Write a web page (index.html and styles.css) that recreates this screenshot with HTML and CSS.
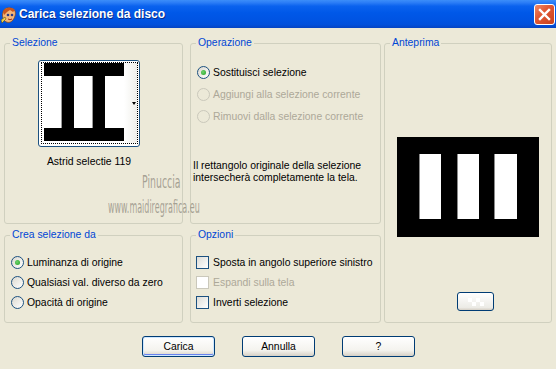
FILE: index.html
```html
<!DOCTYPE html>
<html lang="it">
<head>
    <meta charset="UTF-8">
    <title>Carica selezione da disco</title>
    <link rel="stylesheet" href="styles.css">
</head>
<body>
    <div class="window">
        <div class="titlebar">
            <svg class="app-icon" width="16" height="17" viewBox="0 0 16 17">
                <path d="M3 3 C5 0 12 0 14 4 C15 7 14 11 11 14 C9 16 5 16 3 13 C1 10 1 6 3 3Z" fill="#f2b77c" stroke="#8a4a1c" stroke-width="0.8"/>
                <path d="M2 5 C3 1 10 -1 14 3 L12 5 L9 3 L6 5 L3 8Z" fill="#c8561e"/>
                <circle cx="7" cy="8" r="1.3" fill="#2a3a8a"/>
                <circle cx="11" cy="8" r="1.3" fill="#2a3a8a"/>
                <path d="M7 12 Q9 13.5 11 12" stroke="#a0301a" stroke-width="1" fill="none"/>
                <path d="M0 13 L4 10 L5 12 L1 16Z" fill="#e8d050" stroke="#6a5010" stroke-width="0.6"/>
            </svg>
            <span class="title">Carica selezione da disco</span>
            <span class="close-btn">
                <svg width="13" height="13" viewBox="0 0 13 13">
                    <path d="M2 2 L11 11 M11 2 L2 11" stroke="#fff" stroke-width="2.4" stroke-linecap="square"/>
                </svg>
            </span>
        </div>

        <div class="content">
            <div class="groups">
                <fieldset class="grp sel">
                    <legend>Selezione</legend>
                    <div class="thumb-wrap">
                        <div class="thumb">
                            <div class="focus">
                                <svg class="thumb-img" width="80" height="78" viewBox="0 0 80 78">
                                    <rect width="80" height="78" fill="#fff"/>
                                    <rect width="80" height="13" fill="#000"/>
                                    <rect y="65" width="80" height="13" fill="#000"/>
                                    <rect x="18" width="12" height="78" fill="#000"/>
                                    <rect x="49" width="12" height="78" fill="#000"/>
                                    <rect x="17" y="13" width="1" height="52" fill="#9a9a9a"/>
                                    <rect x="48" y="13" width="1" height="52" fill="#9a9a9a"/>
                                </svg>
                                <div class="drop"><span class="arrow"></span></div>
                            </div>
                        </div>
                        <div class="thumb-name">Astrid selectie 119</div>
                    </div>
                </fieldset>

                <fieldset class="grp op">
                    <legend>Operazione</legend>
                    <div class="opts">
                        <div class="row"><span class="radio on"></span>Sostituisci selezione</div>
                        <div class="row off"><span class="radio"></span>Aggiungi alla selezione corrente</div>
                        <div class="row off"><span class="radio"></span>Rimuovi dalla selezione corrente</div>
                    </div>
                    <p class="note">Il rettangolo originale della selezione<br>intersecherà completamente la tela.</p>
                </fieldset>

                <fieldset class="grp prev">
                    <legend>Anteprima</legend>
                    <svg class="preview" width="142" height="100" viewBox="0 0 142 100">
                        <rect width="142" height="100" fill="#000"/>
                        <rect x="22" y="17" width="22" height="65" fill="#fff"/>
                        <rect x="60" y="17" width="22" height="65" fill="#fff"/>
                        <rect x="97" y="17" width="23" height="65" fill="#fff"/>
                        <rect x="22" y="17" width="1" height="65" fill="#8a8a8a"/>
                        <rect x="60" y="17" width="1" height="65" fill="#8a8a8a"/>
                        <rect x="97" y="17" width="1" height="65" fill="#8a8a8a"/>
                    </svg>
                    <span class="zoom-btn">
                        <svg width="20" height="12" viewBox="0 0 20 12">
                            <rect x="2" y="2" width="4" height="4" fill="#fff"/>
                            <rect x="10" y="2" width="4" height="4" fill="#fff"/>
                            <rect x="6" y="6" width="4" height="4" fill="#fff"/>
                            <rect x="14" y="6" width="4" height="4" fill="#fff"/>
                        </svg>
                    </span>
                </fieldset>

                <fieldset class="grp crea">
                    <legend>Crea selezione da</legend>
                    <div class="opts tight">
                        <div class="row"><span class="radio on"></span>Luminanza di origine</div>
                        <div class="row"><span class="radio"></span>Qualsiasi val. diverso da zero</div>
                        <div class="row"><span class="radio"></span>Opacità di origine</div>
                    </div>
                </fieldset>

                <fieldset class="grp opz">
                    <legend>Opzioni</legend>
                    <div class="opts tight">
                        <div class="row"><span class="check"></span>Sposta in angolo superiore sinistro</div>
                        <div class="row off"><span class="check"></span>Espandi sulla tela</div>
                        <div class="row"><span class="check"></span>Inverti selezione</div>
                    </div>
                </fieldset>
            </div>

            <div class="buttons">
                <button class="default">Carica</button>
                <button>Annulla</button>
                <button>?</button>
            </div>
        </div>

        <div class="watermark">
            <span class="wm1">Pinuccia</span>
            <span class="wm2">www.maidiregrafica.eu</span>
        </div>
    </div>
</body>
</html>
```

FILE: styles.css
```css
body {
    margin: 0;
    background-color: #ece9d8;
    font-family: "Liberation Sans", Arial, sans-serif;
    font-size: 10.4px;
    color: #000;
}
.window {
    position: relative;
    width: 556px;
    height: 369px;
    overflow: hidden;
    background-color: #ece9d8;
}

/* title bar */
.titlebar {
    height: 28px;
    display: flex;
    align-items: center;
    background: linear-gradient(#3c8ef9 0%, #2a7cf6 10%, #0a62ee 22%, #0058e8 45%, #0054e3 70%, #0250db 88%, #0644c2 100%);
}
.app-icon {
    margin-left: 1px;
    margin-top: 2px;
}
.title {
    margin-left: 2px;
    color: #fff;
    font-size: 12px;
    font-weight: bold;
    text-shadow: 1px 1px 0 #0b2d8a;
    flex: 1;
}
.close-btn {
    width: 19px;
    height: 19px;
    margin-right: 1px;
    margin-top: 1px;
    border: 1px solid #fff;
    border-radius: 3px;
    background: linear-gradient(135deg, #f08a68 0%, #e25a35 40%, #c8401c 100%);
    display: flex;
    align-items: center;
    justify-content: center;
}

/* body */
.content {
    padding-top: 9px;
}
.groups {
    display: grid;
    grid-template-columns: 186px 194px 168px;
    grid-template-rows: 187px 94px;
    row-gap: 5px;
    padding-left: 4px;
}
.grp {
    margin: 0;
    padding: 0 5px;
    border: 1px solid #d0d0bf;
    border-radius: 3px;
    box-sizing: border-box;
    min-width: 0;
}
.grp legend {
    padding: 0 2px;
    color: #0046d5;
    line-height: 12px;
}
.sel, .crea { width: 179px; }
.op, .opz { width: 191px; }
.prev {
    grid-column: 3;
    grid-row: 1 / span 2;
    width: 168px;
}

/* selezione */
.thumb-wrap {
    width: 102px;
    margin-left: 28px;
    margin-top: 11px;
}
.thumb {
    width: 102px;
    height: 87px;
    box-sizing: border-box;
    border: 1px solid #1c5180;
    border-radius: 3px;
    padding: 1px 1px 2px 2px;
    background: #fff;
}
.focus {
    height: 100%;
    box-sizing: border-box;
    border: 1px dotted #000;
    display: flex;
    padding-left: 2px;
}
.thumb-img {
    display: block;
}
.drop {
    flex: 1;
    display: flex;
    align-items: center;
    justify-content: flex-end;
    background: linear-gradient(90deg, #fff, #f0efea);
}
.arrow {
    width: 0;
    height: 0;
    margin-right: 1px;
    border-left: 2px solid transparent;
    border-right: 2px solid transparent;
    border-top: 3px solid #000;
}
.thumb-name {
    margin-top: 9px;
    text-align: center;
    line-height: 12px;
}

/* options */
.opts {
    margin-top: 12px;
}
.row {
    display: flex;
    align-items: center;
    height: 22px;
    gap: 3px;
    white-space: nowrap;
}
.tight {
    margin-top: 11px;
}
.tight .row {
    height: 20px;
}
.off {
    color: #aca899;
}
.radio {
    width: 13px;
    height: 13px;
    box-sizing: border-box;
    margin-left: 1px;
    border: 1px solid #1c5180;
    border-radius: 50%;
    background: linear-gradient(135deg, #dcd9cf, #fff);
    display: flex;
    align-items: center;
    justify-content: center;
}
.radio.on::after {
    content: "";
    width: 5px;
    height: 5px;
    border-radius: 50%;
    background: radial-gradient(circle at 40% 40%, #6fd36f, #21a121);
}
.off .radio {
    border-color: #cac8bb;
    background: none;
}
.check {
    width: 13px;
    height: 13px;
    box-sizing: border-box;
    margin-right: 1px;
    border: 1px solid #1c5180;
    background: linear-gradient(135deg, #dcdcd7, #fff);
}
.off .check {
    border-color: #cac8bb;
    background: #fff;
}
.note {
    margin: 33px 0 0 -3px;
    line-height: 12px;
}

/* anteprima */
.preview {
    display: block;
    margin: 88px auto 0;
}
.zoom-btn {
    display: flex;
    align-items: center;
    justify-content: center;
    width: 37px;
    height: 19px;
    box-sizing: border-box;
    margin: 55px 0 0 67px;
    border: 1px solid #003c74;
    border-radius: 3px;
    background: linear-gradient(#fff, #ecebe6 85%, #d6d0c5);
}

/* buttons */
.buttons {
    display: flex;
    justify-content: center;
    gap: 27px;
    margin-top: 13px;
    padding-left: 1px;
}
button {
    width: 73px;
    height: 21px;
    border: 1px solid #003c74;
    border-radius: 3px;
    background: linear-gradient(#fff, #f4f3ee 70%, #d6d0c5);
    font-family: "Liberation Sans", Arial, sans-serif;
    font-size: 10.4px;
    color: #000;
    padding: 0;
}
button.default {
    box-shadow: inset 0 0 0 1px #cee7ff, inset 0 -1px 0 1px #6982ee;
}

/* watermark */
.watermark {
    position: absolute;
    left: 0;
    top: 0;
    color: rgba(140, 136, 124, 0.75);
    font-family: "DejaVu Sans", sans-serif;
    pointer-events: none;
}
.wm1, .wm2 {
    position: absolute;
    white-space: nowrap;
    transform-origin: 0 0;
}
.wm1 {
    left: 142px;
    top: 172px;
    font-size: 17px;
    transform: scaleX(0.55);
}
.wm2 {
    left: 108px;
    top: 197px;
    font-size: 17px;
    transform: scaleX(0.47);
}
```
